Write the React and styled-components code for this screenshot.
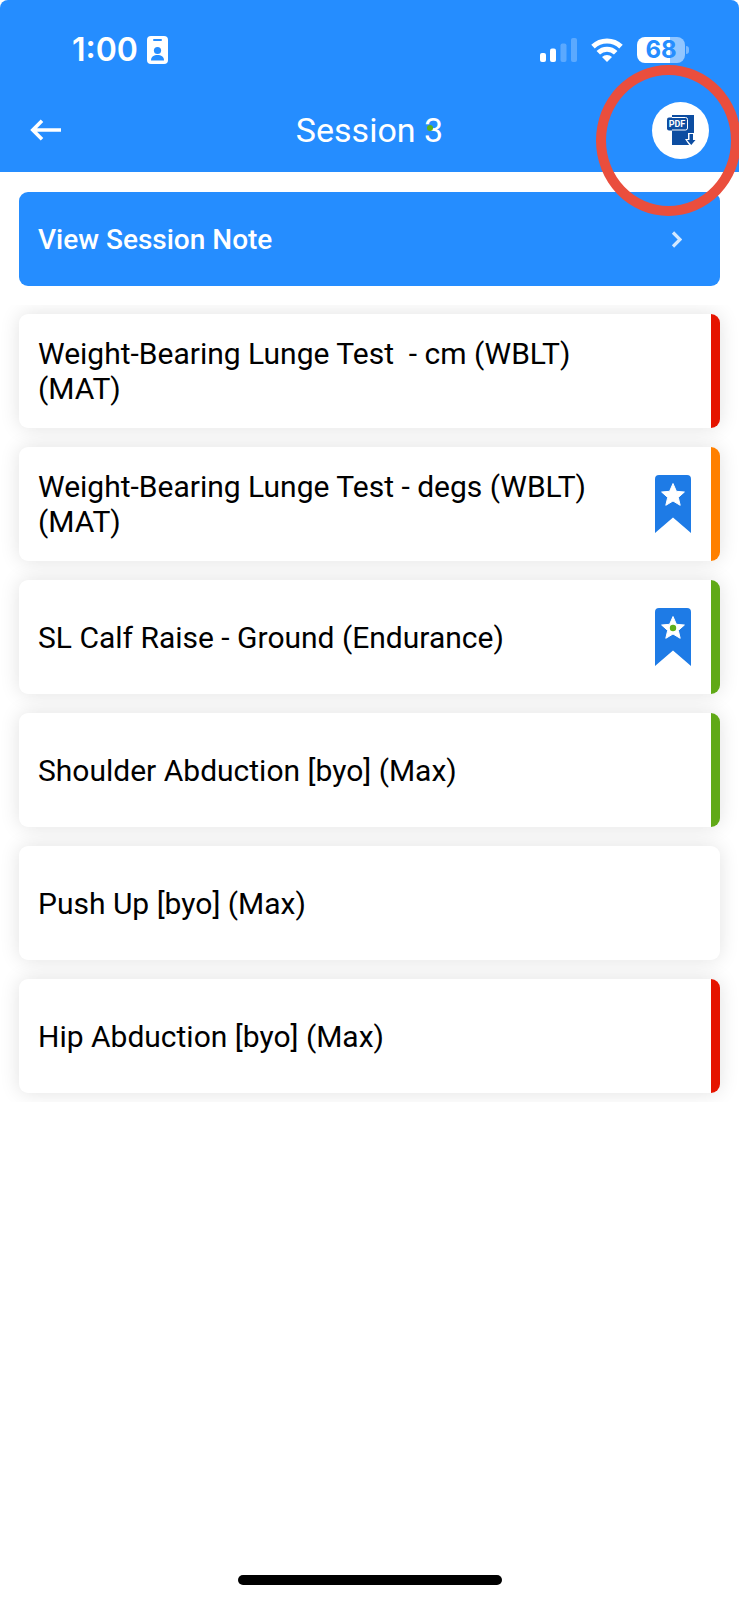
import React from "react"

import styled, { createGlobalStyle } from "styled-components"

const GlobalStyle = createGlobalStyle`
  * {
    box-sizing: border-box;
  }
  body {
    background: white;
    font-family: Roboto, "Liberation Sans", sans-serif;
    margin: 0;
  }
  button {
    background: none;
    border: 0;
    cursor: pointer;
    font-family: inherit;
    padding: 0;
  }
`

const Screen = styled.div`
  display: flex;
  flex-direction: column;
  min-height: 100vh;
  overflow: hidden;
  position: relative;
`

const Header = styled.header`
  background: #258dff;
  border-radius: 8px 8px 0 0;
  color: white;
`

const StatusBar = styled.div`
  align-items: center;
  display: flex;
  font-family: Inter, "Liberation Sans", sans-serif;
  height: 88px;
  justify-content: space-between;
  padding: 11px 50px 0 72px;
`

const StatusGroup = styled.div`
  align-items: center;
  display: flex;
  gap: ${props => props.$gap};
`

const Time = styled.span`
  font-size: 32px;
  font-weight: 600;
  line-height: 40px;
`

const Battery = styled.div`
  align-items: center;
  display: flex;
  gap: 1px;
`

const BatteryLevel = styled.span`
  background: linear-gradient(
    to right,
    white ${props => props.$level}%,
    #92c6ff ${props => props.$level}%
  );
  border-radius: 8px;
  color: #258dff;
  font-size: 24px;
  font-weight: 700;
  height: 26px;
  line-height: 26px;
  text-align: center;
  width: 48px;
`

const BatteryTip = styled.span`
  background: #78b8ff;
  border-radius: 0 4px 4px 0;
  height: 8px;
  width: 3px;
`

const NavBar = styled.nav`
  align-items: center;
  display: grid;
  grid-template-columns: 1fr auto 1fr;
  height: 84px;
  padding: 0 30px;
`

const BackButton = styled.button`
  display: flex;
  justify-self: start;
`

const Title = styled.h1`
  font-size: 34px;
  font-weight: 400;
  line-height: 40px;
  margin: 0;
  position: relative;
`

const TitleDot = styled.span`
  background: #5fb01a;
  border-radius: 50%;
  height: 6px;
  position: absolute;
  right: 10px;
  top: 15px;
  width: 6px;
`

const PdfButton = styled.button`
  align-items: center;
  background: white;
  border-radius: 50%;
  display: flex;
  height: 57px;
  justify-content: center;
  justify-self: end;
  width: 57px;
`

const Highlight = styled.div`
  border: 10px solid #ea4e3d;
  border-radius: 50%;
  height: 151px;
  pointer-events: none;
  position: absolute;
  right: -2px;
  top: 65px;
  width: 145px;
`

const NoteButton = styled.button`
  && {
    align-items: center;
    background: #258dff;
    border-radius: 9px;
    color: white;
    display: flex;
    font-size: 28px;
    font-weight: 500;
    height: 94px;
    justify-content: space-between;
    margin: 20px 19px 19px;
    padding: 0 38px 0 19px;
  }
`

const TestList = styled.ul`
  display: flex;
  flex-direction: column;
  gap: 19px;
  list-style: none;
  margin: 0;
  overflow: hidden;
  padding: 9px 19px;
`

const TestCard = styled.button`
  && {
    align-items: center;
    background: white;
    border-radius: 9px;
    box-shadow: 0 0 20px rgba(0, 0, 0, 0.12);
    color: black;
    display: grid;
    font-size: 30px;
    gap: 20px;
    grid-template-columns: 1fr 36px 9px;
    height: 114px;
    line-height: 35px;
    overflow: hidden;
    padding-left: 19px;
    text-align: left;
    width: 100%;
  }
`

const TestName = styled.span`
  white-space: pre-wrap;
`

const Stripe = styled.span`
  align-self: stretch;
  background: ${props => props.$color || "transparent"};
  grid-column: 3;
`

const HomeIndicator = styled.div`
  background: black;
  border-radius: 5px;
  height: 10px;
  margin: auto auto 15px;
  width: 264px;
`

const tests = [
  { name: "Weight-Bearing Lunge Test  - cm (WBLT) (MAT)", color: "#e51400" },
  {
    name: "Weight-Bearing Lunge Test - degs (WBLT) (MAT)",
    color: "#ff8000",
    marked: true,
  },
  {
    name: "SL Calf Raise - Ground (Endurance)",
    color: "#60a917",
    marked: true,
    dot: true,
  },
  { name: "Shoulder Abduction [byo] (Max)", color: "#60a917" },
  { name: "Push Up [byo] (Max)" },
  { name: "Hip Abduction [byo] (Max)", color: "#e51400" },
]

const BadgeIcon = () => (
  <svg width="21" height="28" viewBox="0 0 21 28" aria-hidden="true">
    <rect width="21" height="28" rx="4" fill="white" />
    <rect x="6" y="3" width="9" height="2" rx="1" fill="#258dff" />
    <circle cx="10.5" cy="14.5" r="3.6" fill="#258dff" />
    <path d="M4 24.5c0-4 3-5.5 6.5-5.5s6.5 1.5 6.5 5.5z" fill="#258dff" />
  </svg>
)

const SignalIcon = () => (
  <svg width="38" height="24" viewBox="0 0 38 24" fill="white" aria-hidden="true">
    <rect x="1" y="15" width="6" height="9" rx="2" />
    <rect x="11" y="10.5" width="6" height="13.5" rx="2" />
    <rect x="21.5" y="5.5" width="6" height="18.5" rx="2" opacity="0.25" />
    <rect x="32" y="0" width="6" height="24" rx="2" opacity="0.25" />
  </svg>
)

const WifiIcon = () => (
  <svg width="32" height="24" viewBox="0 0 32 24" aria-hidden="true">
    <g fill="none" stroke="white" strokeWidth="5">
      <path d="M2 8.6a20 20 0 0 1 28 0" />
      <path d="M7.3 14.8a12.5 12.5 0 0 1 17.4 0" />
    </g>
    <path d="M16 24l-5-5a7.4 7.4 0 0 1 10 0z" fill="white" />
  </svg>
)

const BackIcon = () => (
  <svg width="32" height="22" viewBox="0 0 32 22" aria-hidden="true">
    <path
      d="M12 1.8L2.8 11l9.2 9.2M3 11h28"
      fill="none"
      stroke="white"
      strokeWidth="3.6"
    />
  </svg>
)

const PdfIcon = () => (
  <svg width="30" height="32" viewBox="0 0 30 32" aria-hidden="true">
    <path d="M6 1h22v30H6z" fill="#0d4da1" />
    <rect x="1" y="3.5" width="21" height="13" rx="2" fill="#0d4da1" />
    <path
      d="M6 3.5h13.5q2 0 2 2v8.500q0 2-2 2H6"
      fill="none"
      stroke="white"
    />
    <text
      x="11"
      y="13"
      fill="white"
      fontFamily="Roboto, sans-serif"
      fontSize="9"
      fontWeight="700"
      textAnchor="middle"
    >
      PDF
    </text>
    <path d="M29 19v13h-5l-2-2.500-3-4.500h3v-6z" fill="white" />
    <path d="M23.500 20h3.500v6h2.500l-4.250 5-4.250-5h2.500z" fill="#0d4da1" />
  </svg>
)

const ChevronIcon = () => (
  <svg width="11" height="17" viewBox="0 0 11 17" aria-hidden="true">
    <path
      d="M2 1.5l7 7-7 7"
      fill="none"
      stroke="#d3e8ff"
      strokeWidth="3.2"
    />
  </svg>
)

const BookmarkIcon = ({ dot }) => (
  <svg width="36" height="58" viewBox="0 0 36 58" aria-hidden="true">
    <path d="M4 0h28a4 4 0 0 1 4 4v54L18 42.5 0 58V4a4 4 0 0 1 4-4z" fill="#1e7be6" />
    <path
      d="M18 8.5l3.4 7.8 8 .7-6.1 5.4 1.9 7.9-7.2-4.3-7.2 4.3 1.9-7.9-6.1-5.4 8-.7z"
      fill="white"
      stroke="white"
      strokeLinejoin="round"
    />
    {dot && <circle cx="18" cy="20" r="3.2" fill="#5fb01a" />}
  </svg>
)

const App = () => (
  <Screen>
    <GlobalStyle />
    <Header>
      <StatusBar>
        <StatusGroup $gap="9px">
          <Time>1:00</Time>
          <BadgeIcon />
        </StatusGroup>
        <StatusGroup $gap="14px">
          <SignalIcon />
          <WifiIcon />
          <Battery>
            <BatteryLevel $level={68}>68</BatteryLevel>
            <BatteryTip />
          </Battery>
        </StatusGroup>
      </StatusBar>
      <NavBar>
        <BackButton type="button" aria-label="Back">
          <BackIcon />
        </BackButton>
        <Title>
          Session 3
          <TitleDot />
        </Title>
        <PdfButton type="button" aria-label="Download PDF">
          <PdfIcon />
        </PdfButton>
      </NavBar>
    </Header>
    <NoteButton type="button">
      View Session Note
      <ChevronIcon />
    </NoteButton>
    <TestList>
      {tests.map(test => (
        <li key={test.name}>
          <TestCard type="button">
            <TestName>{test.name}</TestName>
            {test.marked && <BookmarkIcon dot={test.dot} />}
            <Stripe $color={test.color} />
          </TestCard>
        </li>
      ))}
    </TestList>
    <HomeIndicator />
    <Highlight />
  </Screen>
)

export default App
